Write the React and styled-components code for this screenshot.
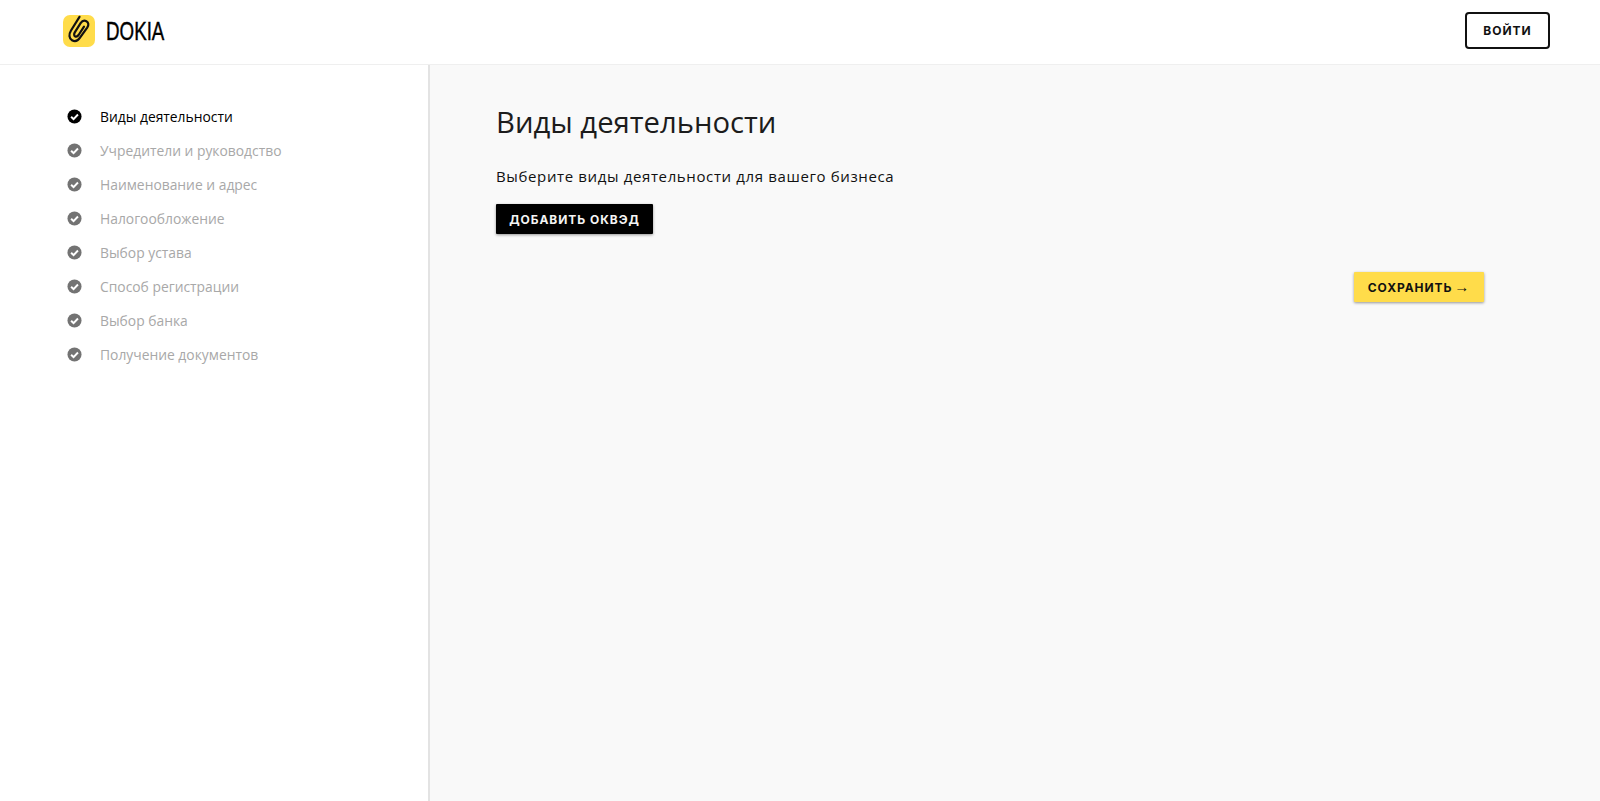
import styled, { createGlobalStyle } from 'styled-components';

const steps = [
  'Виды деятельности',
  'Учредители и руководство',
  'Наименование и адрес',
  'Налогообложение',
  'Выбор устава',
  'Способ регистрации',
  'Выбор банка',
  'Получение документов',
];

const App = () => {
  return (
    <Page>
      <GlobalStyle />
      <Header>
        <Logo>
          <LogoIcon>
            <svg width="32" height="32" viewBox="0 0 32 32" fill="none">
              <path
                d="M16.5 1.8 L8 15.5 C5.6 19.4 6 23.4 9 25.2 C12 27 15 25.6 17 22.6 L24.2 12.6 C26 9.8 25.6 7.4 23.4 6.2 C21.2 5 19 6 17.6 8.2 L11.8 17.4 C10.8 19.2 11 20.8 12.2 21.4 C13.4 22 14.6 21.4 15.6 20 L21 11.6"
                stroke="#111"
                strokeWidth="2.2"
                strokeLinecap="round"
              />
            </svg>
          </LogoIcon>
          <LogoText>DOKIA</LogoText>
        </Logo>
        <LoginButton>Войти</LoginButton>
      </Header>
      <Body>
        <Sidebar>
          {steps.map((step, i) => (
            <Step key={step} $active={i === 0}>
              <StepIcon viewBox="0 0 16 16" $active={i === 0}>
                <circle cx="8" cy="8" r="7.5" fill="currentColor" />
                <path d="M4.4 8.2 L7 10.8 L11.7 5.9" stroke="#fff" strokeWidth="2.1" fill="none" />
              </StepIcon>
              {step}
            </Step>
          ))}
        </Sidebar>
        <Main>
          <Title>Виды деятельности</Title>
          <Subtitle>Выберите виды деятельности для вашего бизнеса</Subtitle>
          <AddButton>Добавить ОКВЭД</AddButton>
          <Actions>
            <SaveButton>Сохранить <Arrow>→</Arrow></SaveButton>
          </Actions>
        </Main>
      </Body>
    </Page>
  );
}

export default App

const GlobalStyle = createGlobalStyle`
  html, body {
    margin: 0;
    padding: 0;
    height: 100%;
    background: #fff;
  }
  * {
    box-sizing: border-box;
  }
`;

const Page = styled.div`
  height: 801px;
  display: flex;
  flex-direction: column;
  overflow: hidden;
  font-family: "Open Sans", sans-serif;
`;

const Header = styled.header`
  height: 65px;
  flex-shrink: 0;
  display: flex;
  align-items: center;
  justify-content: space-between;
  padding: 0 50px 3px 63px;
  background: #fff;
  border-bottom: 1px solid #efefef;
`;

const Logo = styled.div`
  display: flex;
  align-items: center;
  gap: 11px;
`;

const LogoIcon = styled.div`
  width: 32px;
  height: 32px;
  display: flex;
  background: #ffdc4a;
  border-radius: 7px;
`;

const LogoText = styled.span`
  font-family: "Liberation Sans", sans-serif;
  font-size: 25px;
  line-height: 32px;
  color: #000;
  display: inline-block;
  width: 58px;
  transform-origin: left center;
  transform: scaleX(0.75);
  -webkit-text-stroke: 0.4px #000;
`;

const LoginButton = styled.button`
  width: 85px;
  height: 37px;
  padding: 0;
  background: #fff;
  border: 2px solid #111;
  border-radius: 4px;
  font-family: Inter, sans-serif;
  font-size: 12px;
  font-weight: 700;
  letter-spacing: 1px;
  text-transform: uppercase;
  color: #111;
`;

const Body = styled.div`
  flex: 1;
  display: flex;
`;

const Sidebar = styled.nav`
  width: 430px;
  flex-shrink: 0;
  padding: 34px 0 0 67px;
  background: #fff;
  border-right: 2px solid #e3e3e3;
`;

const Step = styled.div`
  height: 34px;
  display: flex;
  align-items: center;
  gap: 18px;
  font-size: 13.85px;
  color: ${props => props.$active ? '#000' : '#a8a8a8'};
`;

const StepIcon = styled.svg`
  width: 15px;
  height: 15px;
  color: ${props => props.$active ? '#000' : '#737373'};
`;

const Main = styled.main`
  flex: 1;
  padding: 37px 116px 0 66px;
  background: #f9f9f9;
`;

const Title = styled.h1`
  margin: 0;
  font-size: 29.25px;
  font-weight: 400;
  line-height: 41px;
  color: #1c1c1c;
`;

const Subtitle = styled.p`
  margin: 22px 0 0;
  font-size: 15px;
  line-height: 22px;
  letter-spacing: 0.63px;
  color: #111;
`;

const AddButton = styled.button`
  display: block;
  margin-top: 17px;
  width: 157px;
  height: 30px;
  padding: 0;
  background: #000;
  border: none;
  border-radius: 1px;
  box-shadow: 0 1px 3px rgba(0, 0, 0, 0.4);
  font-family: Inter, sans-serif;
  font-size: 12px;
  font-weight: 700;
  letter-spacing: 0.95px;
  text-transform: uppercase;
  color: #f4f4f4;
`;

const Actions = styled.div`
  display: flex;
  justify-content: flex-end;
  margin-top: 38px;
`;

const SaveButton = styled.button`
  width: 130px;
  height: 30px;
  padding: 0;
  background: #ffdc4a;
  border: none;
  border-radius: 1px;
  box-shadow: 0 1px 3px rgba(0, 0, 0, 0.4);
  font-family: Inter, sans-serif;
  font-size: 12px;
  font-weight: 700;
  letter-spacing: 0.95px;
  text-transform: uppercase;
  color: #111;
`;

const Arrow = styled.span`
  font-family: Roboto, sans-serif;
  font-size: 15px;
  font-weight: 500;
  line-height: 1;
  margin-left: -2px;
`;
